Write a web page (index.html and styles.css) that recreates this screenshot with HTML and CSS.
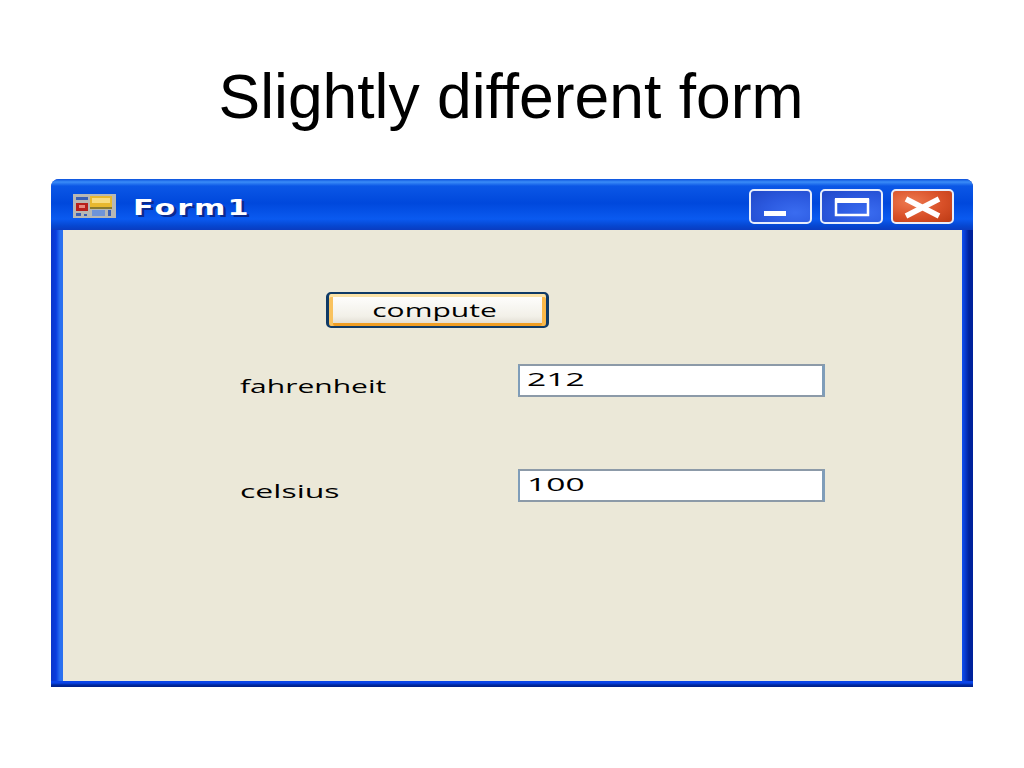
FILE: index.html
```html
<!DOCTYPE html>
<html lang="en">
<head>
<meta charset="utf-8">
<title>Slightly different form</title>
<link rel="stylesheet" href="styles.css">
</head>
<body>
<main class="slide">
  <h1 class="heading">Slightly different form</h1>
  <section class="window">
    <header class="titlebar">
      <svg class="app-icon" width="43" height="24" viewBox="0 0 43 24" aria-hidden="true">
        <rect width="43" height="24" fill="#b8b8b4"/>
        <rect x="3" y="3" width="12" height="3" fill="#3a5fb5"/>
        <rect x="3" y="9" width="12" height="8" fill="#b8201c"/>
        <rect x="6" y="11" width="6" height="3" fill="#e88a80"/>
        <rect x="3" y="19" width="5" height="3" fill="#3a5fb5"/>
        <rect x="11" y="20" width="3" height="2" fill="#3a5fb5"/>
        <rect x="17" y="2" width="22" height="11" fill="#e8b830"/>
        <rect x="19" y="4" width="18" height="5" fill="#f8dc80"/>
        <rect x="17" y="13" width="22" height="2" fill="#8a7a30"/>
        <rect x="19" y="16" width="13" height="6" fill="#6f94d8"/>
        <rect x="35" y="16" width="3" height="6" fill="#3a5fb5"/>
      </svg>
      <span class="window-title">Form1</span>
      <div class="controls">
        <button class="ctl ctl-blue" type="button" aria-label="Minimize">
          <svg width="63" height="35" viewBox="0 0 63 35"><rect x="15" y="22" width="22" height="5" fill="#fff"/></svg>
        </button>
        <button class="ctl ctl-blue" type="button" aria-label="Maximize">
          <svg width="63" height="35" viewBox="0 0 63 35"><rect x="16" y="11" width="32" height="15" fill="none" stroke="#fff" stroke-width="2.500"/><rect x="15" y="9" width="34" height="5" fill="#fff"/></svg>
        </button>
        <button class="ctl ctl-red" type="button" aria-label="Close">
          <svg width="63" height="35" viewBox="0 0 63 35"><path d="M15 10 L48 27 M48 10 L15 27" stroke="#fff" stroke-width="5.500" fill="none"/></svg>
        </button>
      </div>
    </header>
    <div class="client">
      <div class="button-row">
        <button class="compute" type="button"><span class="wide">compute</span></button>
      </div>
      <div class="field first">
        <span class="label"><span class="wide">fahrenheit</span></span>
        <div class="input"><span class="wide digits">212</span></div>
      </div>
      <div class="field second">
        <span class="label"><span class="wide celsius">celsius</span></span>
        <div class="input"><span class="wide digits">100</span></div>
      </div>
    </div>
  </section>
</main>
</body>
</html>
```
FILE: styles.css
```css
* { box-sizing: border-box; }
html, body { margin: 0; padding: 0; }
body { background: #fff; font-family: "Liberation Sans", Arial, sans-serif; color: #000; width: 1024px; height: 768px; overflow: hidden; }
.slide { display: flex; flex-direction: column; height: 768px; }
.heading { margin: 0 0 0 -2px; padding-top: 62px; height: 179px; font-size: 62.400px; line-height: 70px; font-weight: 400; text-align: center; }
.window { margin-left: 51px; width: 922px; height: 508px; display: flex; flex-direction: column; border-radius: 8px 8px 0 0; background: linear-gradient(180deg, #0a44e8 0, #0a44e8 2px, #00289c 4px, #001f88 6px) bottom / 100% 6px no-repeat, linear-gradient(90deg, #0c36c8 0, #0a3ce0 5px, #2a70f0 9px, #2a70f0 12px, #1050f0 911px, #0a3cd0 914px, #00229c 918px, #00229c 922px); }
.titlebar { height: 51px; flex: none; display: flex; align-items: center; padding: 0 19px 0 22px; border-radius: 8px 8px 0 0; background: linear-gradient(180deg, #0a50dc 0, #3a8cf8 3px, #0b57e6 7px, #0048dc 24px, #0a5af0 40px, #0646d0 47px, #0a3cc0 51px); }
.app-icon { flex: none; margin-top: 3px; }
.window-title { margin-left: 17px; color: #fff; font-family: "DejaVu Sans", sans-serif; font-weight: 700; font-size: 22px; letter-spacing: 1.500px; text-shadow: 2px 2px 0 #0a2a90; margin-top: 5px; transform-origin: 0 50%; transform: scale(1.37, 1); }
.controls { margin-left: auto; display: flex; gap: 8px; margin-top: 4px; }
.ctl { width: 63px; height: 35px; padding: 0; border: 2px solid #e8eefc; border-radius: 5px; display: block; overflow: hidden; }
.ctl svg { display: block; margin: -2px; }
.ctl-blue { background: radial-gradient(ellipse at 75% 70%, #3a6cf0 0, #2c5ae0 50%, #2048c8 100%); }
.ctl-red { background: radial-gradient(ellipse at 30% 35%, #ee7a50 0, #d85028 55%, #bc3a14 100%); }
.client { margin: 0 11px 6px 12px; flex: 1; background: #ebe8d8; padding-top: 62px; }
.button-row { padding-left: 263px; height: 36px; }
.compute { width: 223px; height: 36px; padding: 0 6px 0 0; display: flex; align-items: center; justify-content: center; border: 2px solid #0f3a66; border-left-width: 3px; border-right-width: 3px; border-radius: 5px; background: linear-gradient(180deg, #fff 0, #f2f0e8 70%, #dcd8cc 100%); box-shadow: inset 0 3px 0 #fbe3a8, inset 4px 0 0 #f9c25e, inset -4px 0 0 #f9b84a, inset 0 -3px 0 #ef9e24; font-family: "Open Sans", sans-serif; font-weight: 400; font-size: 20px; color: #000; }
.field { display: flex; align-items: flex-start; padding-left: 177px; }
.first { margin-top: 36px; }
.second { margin-top: 68px; }
.label { width: 278px; padding-top: 9px; font-family: "Open Sans", sans-serif; font-weight: 400; font-size: 20px; line-height: 28px; display: block; }
.input { width: 307px; height: 33px; background: #fff; border-style: solid; border-width: 2px 3px 2px 2px; border-color: #8c9aa8 #7f9db9 #8c9aa8 #7f9db9; padding-left: 7px; font-family: "Open Sans", sans-serif; font-weight: 400; font-size: 20px; line-height: 27px; }
.wide { display: inline-block; transform-origin: 0 50%; transform: scale(1.5, 0.92); }
.wide.celsius { transform: scale(1.6, 0.92); }
.wide.digits { transform: scale(1.68, 0.92); }
.compute .wide { transform-origin: 50% 50%; }
```
